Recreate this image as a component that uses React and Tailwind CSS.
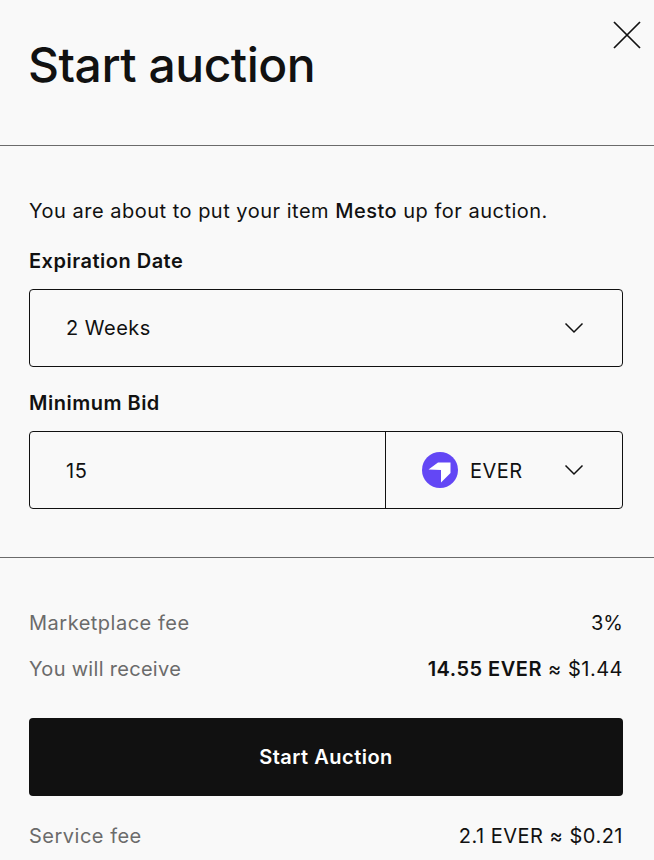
export default function App() {
  const chev = (
    <svg width="20" height="12" viewBox="0 0 20 12" fill="none" stroke="#111" strokeWidth="1.5"><path d="M1.5 1.5 L10 10 L18.5 1.5" /></svg>
  );
  return (
    <div className="relative h-[860px] w-[654px] overflow-hidden bg-[#f9f9f9] text-[#111111]" style={{ fontFamily: "Inter, sans-serif" }}>
      <button className="absolute right-[12px] top-[20px]">
        <svg width="30" height="30" viewBox="0 0 30 30" fill="none" stroke="#111" strokeWidth="1.75" className="block"><path d="M2 2 L28 28 M28 2 L2 28" /></svg>
      </button>
      <div className="flex h-[146px] items-start border-b border-[#6b6b6b] pl-[28px] pr-[29px] pt-[36px]">
        <h1 className="text-[48px] font-medium leading-[58px] tracking-[-0.48px]">Start auction</h1>
      </div>
      <div className="h-[412px] border-b border-[#6b6b6b] px-[29px] pt-[52px]">
        <p className="text-[20px] leading-[26px] tracking-[0.5px]">You are about to put your item <span className="font-medium">Mesto</span> up for auction.</p>
        <div className="mt-[24px] text-[20px] font-semibold leading-[26px] tracking-[0.5px]">Expiration Date</div>
        <div className="mt-[15px] flex h-[78px] w-[594px] items-center justify-between rounded border border-[#111] pl-[36px] pr-[38px] text-[20px] tracking-[0.5px]">
          <span>2 Weeks</span>
          {chev}
        </div>
        <div className="mt-[23px] text-[20px] font-semibold leading-[26px] tracking-[0.5px]">Minimum Bid</div>
        <div className="mt-[15px] flex h-[78px] w-[594px] rounded border border-[#111] text-[20px] tracking-[0.5px]">
          <div className="flex w-[356px] items-center border-r border-[#111] pl-[36px] pt-px">15</div>
          <div className="flex flex-1 items-center pl-[36px] pr-[38px]">
            <svg width="36" height="36" viewBox="0 0 36 36" className="shrink-0"><circle cx="18" cy="18" r="18" fill="#6347f5" /><path d="M6.5 17.5 L16 10.5 H28.5 V21 L19 30.5 V18 Z" fill="#fff" /></svg>
            <span className="ml-[12px] pt-px">EVER</span>
            <span className="ml-auto flex">{chev}</span>
          </div>
        </div>
      </div>
      <div className="pl-[29px] pr-[31px] pt-[52px] text-[20px] leading-[26px] tracking-[0.5px]">
        <div className="flex justify-between text-[#6b6b6b]"><span>Marketplace fee</span><span className="text-[#111] tracking-[0px]">3%</span></div>
        <div className="mt-[20px] flex justify-between text-[#6b6b6b]"><span className="tracking-[0.3px]">You will receive</span><span className="text-[#111]"><b className="font-semibold">14.55 EVER</b> ≈ $1.44</span></div>
        <button className="mt-[36px] flex h-[78px] w-[594px] items-center justify-center rounded bg-[#111] font-semibold text-white">Start Auction</button>
        <div className="mt-[27px] flex justify-between text-[#6b6b6b]"><span>Service fee</span><span className="text-[#111]">2.1 EVER ≈ $0.21</span></div>
      </div>
    </div>
  );
}
